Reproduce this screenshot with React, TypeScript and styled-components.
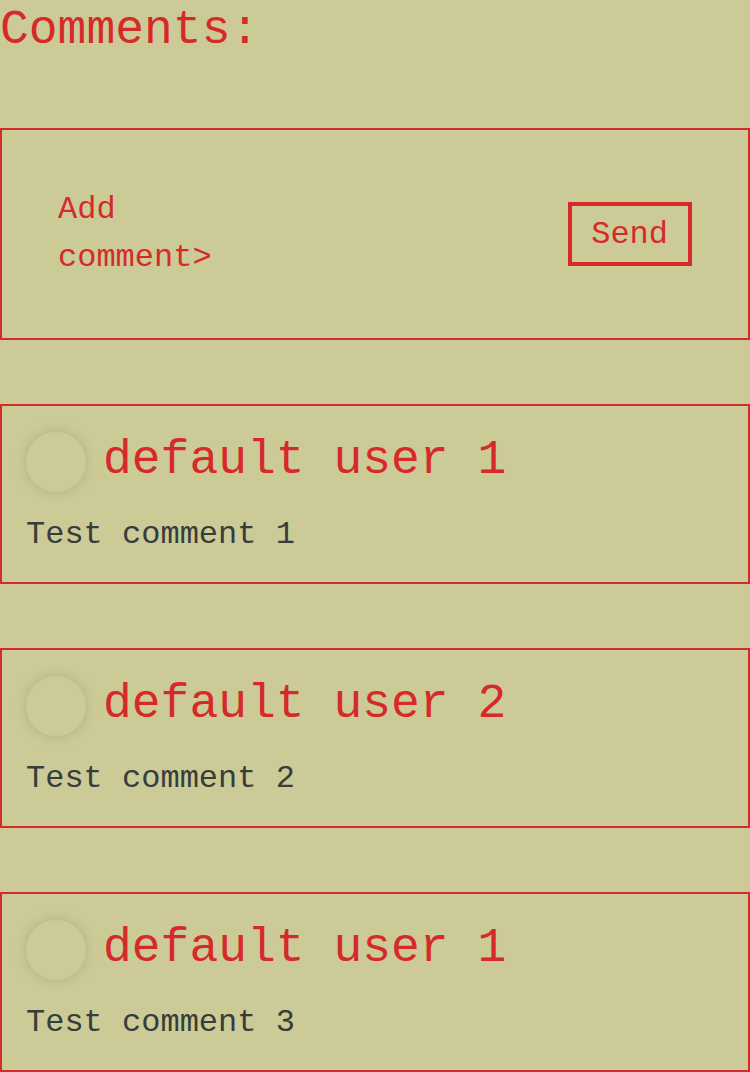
import React from "react";
import styled, { createGlobalStyle } from "styled-components";

const Global = createGlobalStyle`
  html, body { margin: 0; padding: 0; background: #cccb98; }
  body { font-family: "Liberation Mono", monospace; }
  * { box-sizing: border-box; }
`;

const Page = styled.div`
  display: flex;
  flex-direction: column;
  width: 750px;
  padding-bottom: 1px;
`;

const Title = styled.h1`
  margin: 0 0 68px;
  font-family: "Liberation Mono", monospace;
  font-weight: normal;
  font-size: 48px;
  line-height: 60px;
  color: #d62a2a;
`;

const Form = styled.form`
  display: flex;
  align-items: center;
  justify-content: space-between;
  height: 212px;
  padding: 0 56px;
  border: 2px solid #d62a2a;
  margin: 0 0 64px;
`;

const Input = styled.textarea`
  width: 200px;
  height: 96px;
  padding: 0;
  margin: 0;
  border: none;
  outline: none;
  resize: none;
  background: transparent;
  font-family: "Liberation Mono", monospace;
  font-size: 32px;
  line-height: 48px;
  color: #d62a2a;
  overflow: hidden;
  &::placeholder {
    color: #d62a2a;
    opacity: 1;
  }
`;

const SendButton = styled.button`
  padding: 10px 20px 8px 19px;
  border: 4px solid #d62a2a;
  background: transparent;
  font-family: "Liberation Mono", monospace;
  font-size: 32px;
  line-height: 38px;
  color: #d62a2a;
  cursor: pointer;
`;

const List = styled.div`
  display: flex;
  flex-direction: column;
  gap: 64px;
`;

const Card = styled.div`
  border: 2px solid #d62a2a;
  padding: 26px 24px 29px;
`;

const Header = styled.div`
  display: flex;
  align-items: center;
  gap: 17px;
  margin-bottom: 25px;
`;

const Avatar = styled.div`
  width: 60px;
  height: 60px;
  border-radius: 50%;
  background: #cccb98;
  box-shadow: 0 0 12px rgba(110, 100, 40, 0.28);
  flex-shrink: 0;
`;

const Name = styled.div`
  font-family: "Liberation Mono", monospace;
  font-size: 48px;
  line-height: 55px;
  color: #d62a2a;
  margin-top: -3px;
`;

const Body = styled.p`
  margin: 0;
  font-family: "Liberation Mono", monospace;
  font-size: 32px;
  line-height: 36px;
  color: #373d3a;
`;

const comments = [
  { user: "default user 1", text: "Test comment 1" },
  { user: "default user 2", text: "Test comment 2" },
  { user: "default user 1", text: "Test comment 3" },
];

export default function App() {
  return (
    <Page>
      <Global />
      <Title>Comments:</Title>
      <Form onSubmit={(e) => e.preventDefault()}>
        <Input placeholder="Add comment>" />
        <SendButton type="submit">Send</SendButton>
      </Form>
      <List>
        {comments.map((c, i) => (
          <Card key={i}>
            <Header>
              <Avatar />
              <Name>{c.user}</Name>
            </Header>
            <Body>{c.text}</Body>
          </Card>
        ))}
      </List>
    </Page>
  );
}
